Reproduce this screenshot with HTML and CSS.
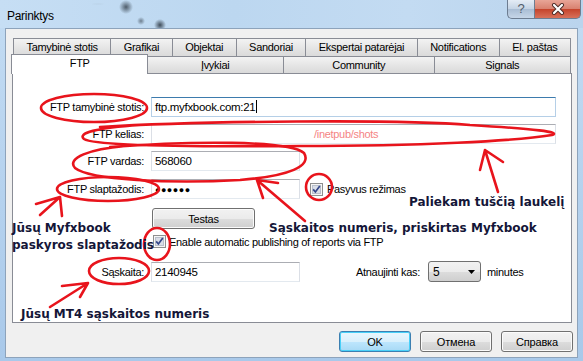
FILE: index.html
```html
<!DOCTYPE html>
<html lang="lt">
<head>
    <meta charset="UTF-8">
    <title>Parinktys</title>
    <link rel="stylesheet" href="styles.css">
</head>
<body>
    <div class="window">
        <div class="titlebar">
            <span class="title">Parinktys</span>
            <div class="caption">
                <div class="cap help">?</div>
                <div class="cap close">
                    <svg width="16" height="12" viewBox="0 0 16 12">
                        <path d="M4 2 L12 10 M12 2 L4 10" stroke="#4a2a25" stroke-width="4" stroke-linecap="round"/>
                        <path d="M4 2 L12 10 M12 2 L4 10" stroke="#fff" stroke-width="2.2" stroke-linecap="round"/>
                    </svg>
                </div>
            </div>
        </div>

        <div class="client">
            <div class="tabs">
                <div class="tab-row">
                    <div class="tab">Tamybinė stotis</div>
                    <div class="tab">Grafikai</div>
                    <div class="tab">Objektai</div>
                    <div class="tab">Sandoriai</div>
                    <div class="tab">Ekspertai patarėjai</div>
                    <div class="tab">Notifications</div>
                    <div class="tab">El. paštas</div>
                </div>
                <div class="tab-row front">
                    <div class="tab active">FTP</div>
                    <div class="tab">Įvykiai</div>
                    <div class="tab community">Community</div>
                    <div class="tab">Signals</div>
                </div>
            </div>

            <div class="panel">
                <div class="row r1">
                    <span class="label">FTP tamybinė stotis:</span>
                    <div class="field wide focus">ftp.myfxbook.com:21<span class="caret"></span></div>
                </div>
                <div class="row r2">
                    <span class="label">FTP kelias:</span>
                    <div class="field wide"><span class="path">/inetpub/shots</span></div>
                </div>
                <div class="row r3">
                    <span class="label">FTP vardas:</span>
                    <div class="field">568060</div>
                </div>
                <div class="row r4">
                    <span class="label">FTP slaptažodis:</span>
                    <div class="field"><span class="dots">●●●●●●</span></div>
                    <label class="checkbox passive">
                        <svg class="check" width="13" height="13" viewBox="0 0 13 13">
                            <rect x="0.5" y="0.5" width="12" height="12" fill="#f6f6f6" stroke="#8e8f8f"/>
                            <rect x="2.5" y="2.5" width="8" height="8" fill="#d9dee8" stroke="#b9c0cc"/>
                            <path d="M3.2 6.4 L5.4 9 L9.8 3" fill="none" stroke="#34478a" stroke-width="1.7"/>
                        </svg>
                        Pasyvus režimas
                    </label>
                </div>
                <div class="row r5">
                    <span class="label"></span>
                    <button class="btn test">Testas</button>
                </div>
                <div class="row r6">
                    <span class="label"></span>
                    <label class="checkbox publish">
                        <svg class="check" width="13" height="13" viewBox="0 0 13 13">
                            <rect x="0.5" y="0.5" width="12" height="12" fill="#f6f6f6" stroke="#8e8f8f"/>
                            <rect x="2.5" y="2.5" width="8" height="8" fill="#d9dee8" stroke="#b9c0cc"/>
                            <path d="M3.2 6.4 L5.4 9 L9.8 3" fill="none" stroke="#34478a" stroke-width="1.7"/>
                        </svg>
                        Enable automatic publishing of reports via FTP
                    </label>
                </div>
                <div class="row r7">
                    <span class="label">Sąskaita:</span>
                    <div class="field">2140945</div>
                    <span class="refresh">Atnaujinti kas:</span>
                    <div class="select">
                        <span>5</span>
                        <svg width="7" height="4" viewBox="0 0 7 4"><path d="M0 0 H7 L3.5 4 Z" fill="#000"/></svg>
                    </div>
                    <span class="unit">minutes</span>
                </div>
            </div>

            <div class="actions">
                <button class="btn default">OK</button>
                <button class="btn">Отмена</button>
                <button class="btn">Справка</button>
            </div>
        </div>

        <!-- hand-drawn notes on top of the dialog -->
        <div class="notes">
            <svg class="marks" width="583" height="361" viewBox="0 0 583 361">
                <g fill="none" stroke="#e8141c" stroke-width="2.6" stroke-linecap="round" stroke-linejoin="round">
                    <ellipse cx="94" cy="108" rx="53" ry="14"/>
                    <path d="M100 127 C 200 121, 400 119, 470 125 C 535 129, 562 132, 552 135 C 515 141, 420 146, 300 146 C 190 147, 95 146, 84 139 C 77 133, 96 128, 140 125"/>
                    <path d="M110 147 C 190 141, 290 140, 304 153 C 312 166, 290 176, 240 180 C 170 184, 90 180, 75 168 C 66 158, 90 149, 125 146"/>
                    <ellipse cx="108" cy="189" rx="51" ry="12"/>
                    <ellipse cx="319" cy="187" rx="13" ry="13"/>
                    <ellipse cx="157" cy="244" rx="13" ry="16"/>
                    <ellipse cx="119" cy="271" rx="30" ry="13"/>
                    <!-- arrows -->
                    <path d="M498 192 L485 150 M485 150 L480 170 M485 150 L503 162"/>
                    <path d="M305 221 L257 180 M257 180 L278 183 M257 180 L263 198"/>
                    <path d="M40 215 L60 197 M60 197 L36 204 M60 197 L62 216"/>
                    <path d="M50 307 L88 283 M88 283 L62 286 M88 283 L80 297"/>
                </g>
            </svg>
            <span class="note n-empty">Paliekam tuščią laukelį</span>
            <span class="note n-account">Sąskaitos numeris, priskirtas Myfxbook</span>
            <span class="note n-pass">Jūsų Myfxbook<br>paskyros slaptažodis</span>
            <span class="note n-mt4">Jūsų MT4 sąskaitos numeris</span>
        </div>
    </div>
</body>
</html>
```
FILE: styles.css
```css
* {
    box-sizing: border-box;
}
body {
    margin: 0;
    padding: 0;
    overflow: hidden;
    font-family: "Liberation Sans", Arial, sans-serif;
    font-size: 11px;
    letter-spacing: -0.3px;
    color: #000;
}
.window {
    position: relative;
    width: 583px;
    height: 361px;
    background: linear-gradient(to bottom, #c3dcf3, #a9c9ea);
}
.titlebar {
    height: 28px;
    display: flex;
    justify-content: space-between;
    background:
        radial-gradient(circle at 126px 7px, rgba(40, 50, 60, 0.75) 0, rgba(40, 50, 60, 0) 7px),
        radial-gradient(circle at 141px 21px, rgba(40, 50, 60, 0.55) 0, rgba(40, 50, 60, 0) 4px),
        radial-gradient(circle at 160px 25px, rgba(30, 40, 50, 0.8) 0, rgba(30, 40, 50, 0) 6px),
        radial-gradient(ellipse at 98px 4px, rgba(120, 130, 140, 0.35) 0, rgba(120, 130, 140, 0) 12px),
        linear-gradient(to right, #c6def4, #bcd7f0 40%, #c3dbf2 70%, #bad4ed);
}
.title {
    padding: 9px 0 0 7px;
    font-size: 12px;
}
.caption {
    display: flex;
    align-items: flex-start;
    margin-right: 2px;
}
.cap {
    height: 19px;
    border: 1px solid #6d7d91;
    border-top: none;
}
.help {
    width: 27px;
    border-right: none;
    border-radius: 0 0 0 5px;
    background: linear-gradient(to bottom, #e4ecf5, #c4d3e4 50%, #a9bdd4 51%, #c6d6e8);
    color: #535d6b;
    font-size: 13px;
    text-align: center;
    line-height: 18px;
}
.close {
    width: 47px;
    border-radius: 0 0 5px 0;
    background: linear-gradient(to bottom, #e8a597, #d8806e 50%, #c5432b 51%, #d8715a);
    display: flex;
    align-items: center;
    justify-content: center;
}
.client {
    margin: 0 5px;
    height: 330px;
    padding: 9px 5px 0 6px;
    background-color: #f0f0f0;
    border: 1px solid #8da3bb;
}
.tabs {
    margin: 0 1px;
}
.tab-row {
    display: flex;
    height: 18px;
}
.tab-row.front {
    height: 17px;
}
.tab {
    flex: 1 1 auto;
    padding: 0 8px;
    margin-left: -1px;
    border: 1px solid #898c95;
    border-bottom: none;
    background: linear-gradient(to bottom, #f3f3f3, #e6e6e6 50%, #dadada);
    text-align: center;
    line-height: 16px;
    white-space: nowrap;
}
.tab:first-child {
    margin-left: 0;
}
.front .tab {
    flex: 1 1 0;
}
.front .tab.community {
    flex-grow: 1.12;
}
.tab.active {
    position: relative;
    z-index: 1;
    margin: -2px -2px 0 -2px;
    height: 20px;
    background: #fff;
    line-height: 17px;
}
.tab.active + .tab {
    margin-left: 0;
}
.panel {
    height: 250px;
    padding-top: 23px;
    background-color: #fff;
    border: 1px solid #898c95;
}
.row {
    display: flex;
    align-items: center;
}
.label {
    width: 131px;
    margin-right: 7px;
    text-align: right;
    white-space: nowrap;
}
.r1, .r2 {
    margin-bottom: 7px;
}
.r3 {
    margin-bottom: 8px;
}
.r4 {
    margin-bottom: 9px;
}
.r5 {
    margin-bottom: 6px;
}
.r6 {
    height: 13px;
    margin-bottom: 13px;
}
.field {
    width: 149px;
    height: 20px;
    padding: 0 3px;
    line-height: 18px;
    font-size: 11.5px;
    border: 1px solid #dbdfe6;
    border-top-color: #abadb3;
    border-bottom-color: #e3e9ef;
    white-space: nowrap;
}
.field.wide {
    width: 405px;
}
.field.focus {
    border-color: #b5cfe7;
    border-top-color: #3d7bad;
}
.caret {
    display: inline-block;
    width: 1px;
    height: 13px;
    margin-left: 1px;
    vertical-align: -2px;
    background-color: #000;
}
.path {
    padding-left: 159px;
    color: #f58484;
    font-size: 11px;
}
.dots {
    font-size: 9px;
    letter-spacing: 0.5px;
}
.checkbox {
    display: flex;
    align-items: center;
    gap: 4px;
    white-space: nowrap;
}
.checkbox.passive {
    margin-left: 10px;
}
.checkbox.publish {
    margin-left: 2px;
    gap: 3px;
}
.btn {
    height: 21px;
    width: 72px;
    padding: 0;
    font-family: "Liberation Sans", Arial, sans-serif;
    font-size: 11px;
    letter-spacing: -0.2px;
    color: #000;
    border: 1px solid #707070;
    border-radius: 3px;
    background: linear-gradient(to bottom, #f2f2f2, #ebebeb 50%, #dddddd 51%, #cfcfcf);
    box-shadow: inset 0 0 0 1px #fbfbfb;
}
.btn.test {
    width: 103px;
    margin-left: 1px;
}
.btn.default {
    border-color: #3c7fb1;
    box-shadow: inset 0 0 0 1px #48d0f8;
    background: linear-gradient(to bottom, #eaf6fd, #d9f0fc 50%, #bee6fd 51%, #a7d9f5);
}
.refresh {
    margin-left: 56px;
    margin-right: 8px;
}
.select {
    width: 53px;
    height: 21px;
    display: flex;
    align-items: center;
    justify-content: space-between;
    padding: 0 5px 0 4px;
    font-size: 12px;
    border: 1px solid #707070;
    border-radius: 3px;
    background: linear-gradient(to bottom, #f2f2f2, #ebebeb 50%, #dddddd 51%, #cfcfcf);
}
.unit {
    margin-left: 6px;
}
.actions {
    display: flex;
    justify-content: flex-end;
    gap: 9px;
    margin: 8px -1px 0 0;
}
.notes {
    position: absolute;
    top: 0;
    left: 0;
    width: 583px;
    height: 361px;
    pointer-events: none;
}
.marks {
    position: absolute;
    top: 0;
    left: 0;
}
.note {
    position: absolute;
    font-family: "DejaVu Sans", Verdana, sans-serif;
    font-weight: bold;
    font-size: 12px;
    letter-spacing: 0;
    color: #141638;
    white-space: nowrap;
    line-height: 17px;
}
.n-empty {
    left: 409px;
    top: 194px;
}
.n-account {
    left: 269px;
    top: 220px;
}
.n-pass {
    left: 12px;
    top: 220px;
}
.n-mt4 {
    left: 21px;
    top: 306px;
}
```
